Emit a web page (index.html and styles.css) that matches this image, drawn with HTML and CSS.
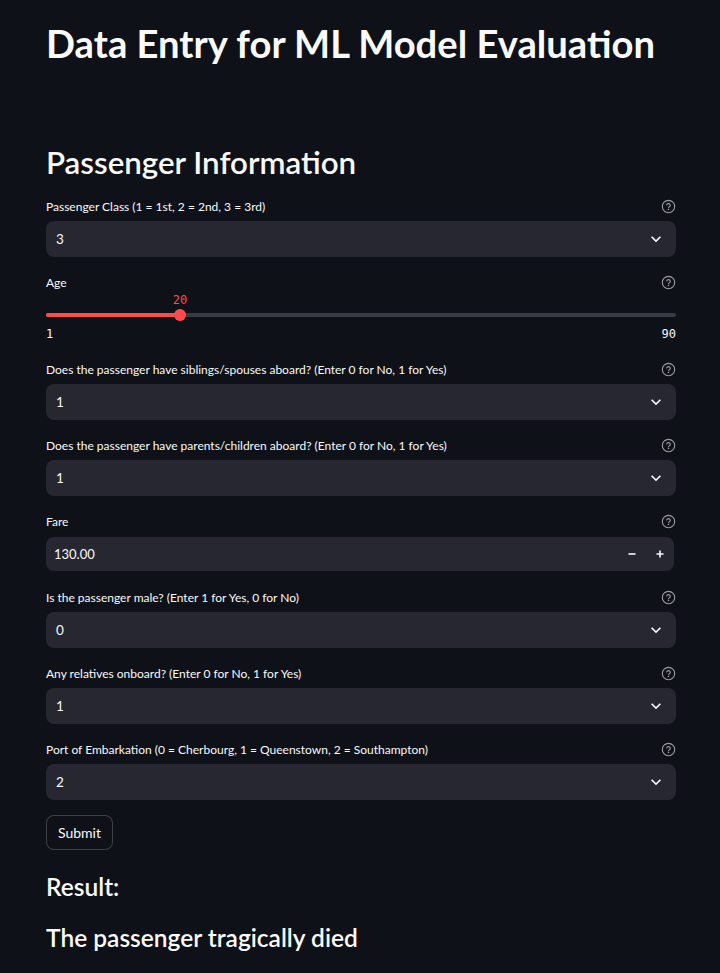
FILE: index.html
```html
<!DOCTYPE html>
<html>
<head>
<meta charset="utf-8">
<link rel="stylesheet" href="styles.css">
</head>
<body>
<main class="main">
  <h1 class="title">Data Entry for ML Model Evaluation</h1>
  <h2 class="section">Passenger Information</h2>

  <div class="form">
    <div class="widget">
      <div class="label-row"><span>Passenger Class (1 = 1st, 2 = 2nd, 3 = 3rd)</span><svg class="help" viewBox="0 0 16 16"><circle cx="8" cy="8" r="6.6"/><path d="M6.1 6.3a1.95 1.95 0 0 1 3.8.5c0 1.3-1.9 1.7-1.9 2.5"/><circle class="dot" cx="8" cy="11.3" r="0.8"/></svg></div>
      <div class="select"><span>3</span><svg class="chev" viewBox="0 0 24 24"><path d="M16.59 8.59 12 13.17 7.41 8.59 6 10l6 6 6-6z"/></svg></div>
    </div>

    <div class="widget">
      <div class="label-row slider-label"><span>Age</span><svg class="help" viewBox="0 0 16 16"><circle cx="8" cy="8" r="6.6"/><path d="M6.1 6.3a1.95 1.95 0 0 1 3.8.5c0 1.3-1.9 1.7-1.9 2.5"/><circle class="dot" cx="8" cy="11.3" r="0.8"/></svg></div>
      <div class="slider">
        <div class="slider-value-row"><span class="slider-value">20</span></div>
        <div class="slider-track-row">
          <div class="track"><div class="track-fill"></div></div>
          <div class="thumb"></div>
        </div>
        <div class="slider-ticks"><span>1</span><span>90</span></div>
      </div>
    </div>

    <div class="widget">
      <div class="label-row"><span>Does the passenger have siblings/spouses aboard? (Enter 0 for No, 1 for Yes)</span><svg class="help" viewBox="0 0 16 16"><circle cx="8" cy="8" r="6.6"/><path d="M6.1 6.3a1.95 1.95 0 0 1 3.8.5c0 1.3-1.9 1.7-1.9 2.5"/><circle class="dot" cx="8" cy="11.3" r="0.8"/></svg></div>
      <div class="select"><span>1</span><svg class="chev" viewBox="0 0 24 24"><path d="M16.59 8.59 12 13.17 7.41 8.59 6 10l6 6 6-6z"/></svg></div>
    </div>

    <div class="widget">
      <div class="label-row"><span>Does the passenger have parents/children aboard? (Enter 0 for No, 1 for Yes)</span><svg class="help" viewBox="0 0 16 16"><circle cx="8" cy="8" r="6.6"/><path d="M6.1 6.3a1.95 1.95 0 0 1 3.8.5c0 1.3-1.9 1.7-1.9 2.5"/><circle class="dot" cx="8" cy="11.3" r="0.8"/></svg></div>
      <div class="select"><span>1</span><svg class="chev" viewBox="0 0 24 24"><path d="M16.59 8.59 12 13.17 7.41 8.59 6 10l6 6 6-6z"/></svg></div>
    </div>

    <div class="widget">
      <div class="label-row"><span>Fare</span><svg class="help" viewBox="0 0 16 16"><circle cx="8" cy="8" r="6.6"/><path d="M6.1 6.3a1.95 1.95 0 0 1 3.8.5c0 1.3-1.9 1.7-1.9 2.5"/><circle class="dot" cx="8" cy="11.3" r="0.8"/></svg></div>
      <div class="number-wrap">
        <div class="number">
          <span class="number-value">130.00</span>
          <span class="step"><svg viewBox="0 0 10 10"><path d="M1.5 5h7"/></svg></span>
          <span class="step"><svg viewBox="0 0 10 10"><path d="M1.5 5h7M5 1.5v7"/></svg></span>
        </div>
      </div>
    </div>

    <div class="widget">
      <div class="label-row"><span>Is the passenger male? (Enter 1 for Yes, 0 for No)</span><svg class="help" viewBox="0 0 16 16"><circle cx="8" cy="8" r="6.6"/><path d="M6.1 6.3a1.95 1.95 0 0 1 3.8.5c0 1.3-1.9 1.7-1.9 2.5"/><circle class="dot" cx="8" cy="11.3" r="0.8"/></svg></div>
      <div class="select"><span>0</span><svg class="chev" viewBox="0 0 24 24"><path d="M16.59 8.59 12 13.17 7.41 8.59 6 10l6 6 6-6z"/></svg></div>
    </div>

    <div class="widget">
      <div class="label-row"><span>Any relatives onboard? (Enter 0 for No, 1 for Yes)</span><svg class="help" viewBox="0 0 16 16"><circle cx="8" cy="8" r="6.6"/><path d="M6.1 6.3a1.95 1.95 0 0 1 3.8.5c0 1.3-1.9 1.7-1.9 2.5"/><circle class="dot" cx="8" cy="11.3" r="0.8"/></svg></div>
      <div class="select"><span>1</span><svg class="chev" viewBox="0 0 24 24"><path d="M16.59 8.59 12 13.17 7.41 8.59 6 10l6 6 6-6z"/></svg></div>
    </div>

    <div class="widget">
      <div class="label-row"><span>Port of Embarkation (0 = Cherbourg, 1 = Queenstown, 2 = Southampton)</span><svg class="help" viewBox="0 0 16 16"><circle cx="8" cy="8" r="6.6"/><path d="M6.1 6.3a1.95 1.95 0 0 1 3.8.5c0 1.3-1.9 1.7-1.9 2.5"/><circle class="dot" cx="8" cy="11.3" r="0.8"/></svg></div>
      <div class="select"><span>2</span><svg class="chev" viewBox="0 0 24 24"><path d="M16.59 8.59 12 13.17 7.41 8.59 6 10l6 6 6-6z"/></svg></div>
    </div>

    <div class="widget">
      <button class="submit">Submit</button>
    </div>
  </div>

  <h3 class="result">Result:</h3>
  <h3 class="result outcome">The passenger tragically died</h3>
</main>
</body>
</html>
```

FILE: styles.css
```css
html, body {
  margin: 0;
  padding: 0;
  background: #0e1117;
}
body {
  font-family: Lato, "Noto Sans", sans-serif;
  color: #fafafa;
  height: 973px;
  overflow: hidden;
}
.main {
  padding: 17px 44px 0 46px;
  width: 630px;
}
.title {
  margin: 0;
  font-size: 38.2px;
  line-height: 52px;
  font-weight: 700;
}
.section {
  margin: 71px 0 0 0;
  font-size: 31.3px;
  line-height: 44px;
  font-weight: 600;
}
.form {
  margin-top: 11.5px;
  display: flex;
  flex-direction: column;
  gap: 15px;
}
.label-row {
  display: flex;
  justify-content: space-between;
  align-items: center;
  height: 21px;
  font-size: 12px;
  margin-bottom: 4px;
}
.slider-label {
  margin-bottom: 0;
}
.help {
  width: 15px;
  height: 15px;
  fill: none;
  stroke: rgba(250, 250, 250, 0.6);
  stroke-width: 1.2;
  stroke-linecap: round;
}
.help .dot {
  fill: rgba(250, 250, 250, 0.6);
  stroke: none;
}
.select {
  height: 36px;
  background: #262730;
  border-radius: 8px;
  display: flex;
  align-items: center;
  justify-content: space-between;
  padding: 0 10px;
  font-size: 13.5px;
  box-sizing: border-box;
}
.chev {
  width: 20px;
  height: 20px;
  fill: #fafafa;
}
.slider {
  display: flex;
  flex-direction: column;
}
.slider-value-row {
  position: relative;
  height: 14px;
}
.slider-value {
  position: absolute;
  left: 134px;
  transform: translateX(-50%);
  top: 0;
  line-height: 14px;
  font-family: "DejaVu Sans Mono", monospace;
  font-size: 12px;
  color: #ff4b4b;
}
.slider-track-row {
  position: relative;
  height: 16px;
  display: flex;
  align-items: center;
}
.track {
  width: 100%;
  height: 4px;
  border-radius: 2px;
  background: #393b44;
  overflow: hidden;
}
.track-fill {
  width: 134px;
  height: 100%;
  background: #ff4b4b;
}
.thumb {
  position: absolute;
  left: 128px;
  top: 2px;
  width: 12px;
  height: 12px;
  border-radius: 50%;
  background: #ff4b4b;
}
.slider-ticks {
  margin-top: 4px;
  height: 17px;
  display: flex;
  justify-content: space-between;
  font-family: "DejaVu Sans Mono", monospace;
  font-size: 12px;
  line-height: 14px;
  color: #fafafa;
}
.number-wrap {
  height: 36px;
  padding: 1px 2px 1px 0;
  box-sizing: border-box;
}
.number {
  height: 34px;
  background: #262730;
  border-radius: 8px;
  display: flex;
  align-items: center;
  padding-left: 8px;
  font-size: 13px;
}
.number-value {
  flex: 1;
}
.step {
  width: 28px;
  height: 34px;
  display: flex;
  align-items: center;
  justify-content: center;
}
.step svg {
  width: 10px;
  height: 10px;
  stroke: #fafafa;
  stroke-width: 1.6;
  fill: none;
}
.submit {
  align-self: flex-start;
  height: 35px;
  padding: 0 11px;
  margin-top: 0.5px;
  background: #0e1117;
  color: #fafafa;
  border: 1px solid rgba(250, 250, 250, 0.2);
  border-radius: 8px;
  font-family: Lato, "Noto Sans", sans-serif;
  font-size: 14px;
}
.widget {
  display: flex;
  flex-direction: column;
}
.result {
  margin: 19px 0 0 0;
  font-size: 24.5px;
  line-height: 36px;
  font-weight: 600;
}
.outcome {
  margin-top: 15px;
}
```
